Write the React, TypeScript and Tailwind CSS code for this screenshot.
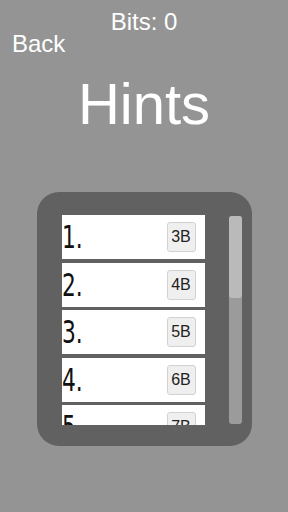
import React from "react";

const hints = [
  { n: 1, cost: "3B" },
  { n: 2, cost: "4B" },
  { n: 3, cost: "5B" },
  { n: 4, cost: "6B" },
  { n: 5, cost: "7B" },
];

export default function App() {
  return (
    <div
      className="w-[288px] h-[512px] bg-[#949494] overflow-hidden text-white"
      style={{ fontFamily: '"Liberation Sans", Arial, sans-serif' }}
    >
      {/* top bar */}
      <div className="pt-[10px] text-center text-[24px] leading-[24px]">Bits: 0</div>
      <div className="-mt-[2px] pl-[12px] text-[24px] leading-[24px]">
        <button className="text-white">Back</button>
      </div>

      {/* title */}
      <h1 className="mt-[19px] text-center text-[58px] leading-[58px]">Hints</h1>

      {/* hint list panel */}
      <div className="mt-[59px] mx-auto w-[215px] h-[254px] rounded-[22px] bg-[#616161] flex pl-[25px] pt-[23px] pr-[10px]">
        <div className="w-[143px] h-[210px] overflow-hidden flex flex-col gap-[3.5px]">
          {hints.map((h) => (
            <div
              key={h.n}
              className="shrink-0 h-[44px] bg-white flex items-center justify-between pr-[9px]"
            >
              <span
                className="text-[#111] text-[32px] leading-none origin-left scale-x-[0.68] inline-block"
                style={{ fontFamily: '"DejaVu Sans", sans-serif' }}
              >
                {h.n}.
              </span>
              <button className="w-[29px] h-[30px] rounded-[3px] bg-[#efefef] border border-[#d2d2d2] text-[#222] text-[16px] leading-none">
                {h.cost}
              </button>
            </div>
          ))}
        </div>

        {/* scrollbar */}
        <div className="ml-[24px] mt-[1px] w-[13px] h-[208px] rounded-[3px] bg-[#9b9b9b] flex flex-col">
          <div className="h-[82px] rounded-[3px] bg-[#bababa]" />
        </div>
      </div>
    </div>
  );
}
